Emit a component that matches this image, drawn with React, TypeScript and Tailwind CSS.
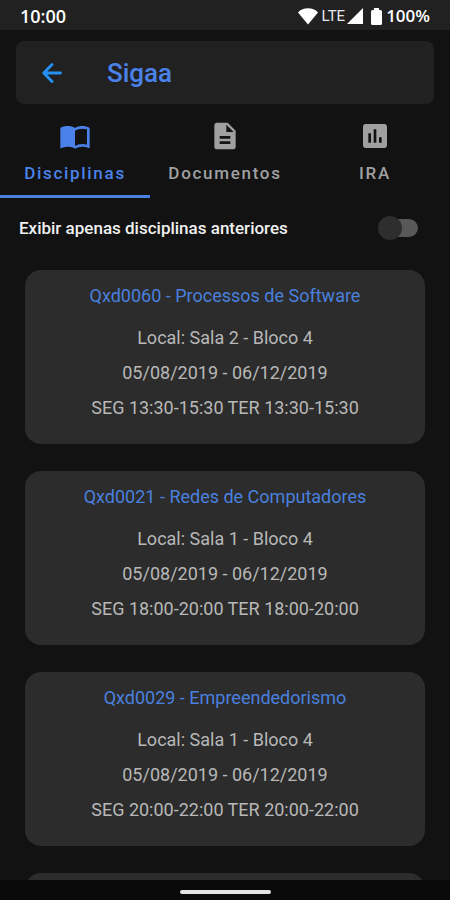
import { useState } from "react";
import type { IconType } from "react-icons";
import { MdAssessment, MdDescription, MdImportContacts } from "react-icons/md";

interface Course {
  code: string;
  name: string;
  room: string;
  period: string;
  schedule: string;
}

const TABS: { label: string; icon: IconType }[] = [
  { label: "Disciplinas", icon: MdImportContacts },
  { label: "Documentos", icon: MdDescription },
  { label: "IRA", icon: MdAssessment },
];

const COURSES: Course[] = [
  {
    code: "Qxd0060",
    name: "Processos de Software",
    room: "Sala 2 - Bloco 4",
    period: "05/08/2019 - 06/12/2019",
    schedule: "SEG 13:30-15:30 TER 13:30-15:30",
  },
  {
    code: "Qxd0021",
    name: "Redes de Computadores",
    room: "Sala 1 - Bloco 4",
    period: "05/08/2019 - 06/12/2019",
    schedule: "SEG 18:00-20:00 TER 18:00-20:00",
  },
  {
    code: "Qxd0029",
    name: "Empreendedorismo",
    room: "Sala 1 - Bloco 4",
    period: "05/08/2019 - 06/12/2019",
    schedule: "SEG 20:00-22:00 TER 20:00-22:00",
  },
];

function StatusBar() {
  return (
    <div className="flex h-[30px] shrink-0 items-center justify-between bg-[#212121] px-5 pt-0.5 font-['Open_Sans',sans-serif] leading-5 text-white">
      <span className="text-lg font-semibold leading-5">10:00</span>
      <div className="flex items-center">
        <svg className="h-[17px] w-5" viewBox="0 0 20 17" fill="currentColor">
          <path d="M10 16.500 0 4.400C2.600 1.700 6 .3 10 .3s7.400 1.400 10 4.100z" />
        </svg>
        <span className="ml-1 font-[Roboto,sans-serif] text-[15px] leading-5 text-gray-200">LTE</span>
        <svg className="ml-0.5 h-4 w-4" viewBox="0 0 16 16" fill="currentColor">
          <path d="M0 16 16 0v16z" />
        </svg>
        <svg className="ml-2 h-[17px] w-[11px]" viewBox="0 0 11 17" fill="currentColor">
          <path d="M3 2V0h5v2h1.500A1.500 1.500 0 0 1 11 3.500v12A1.500 1.500 0 0 1 9.500 17h-8A1.500 1.500 0 0 1 0 15.500v-12A1.500 1.500 0 0 1 1.500 2z" />
        </svg>
        <span className="ml-1 text-[17px] font-semibold leading-5">100%</span>
      </div>
    </div>
  );
}

function CourseCard({ course }: { course: Course }) {
  return (
    <article className="rounded-2xl bg-[#2c2c2c] px-4 pb-[19px] pt-2 text-center text-lg leading-[35px] text-[#b8b8b8]">
      <h2 className="mb-[7px] text-[#4a80df]">
        {course.code} - {course.name}
      </h2>
      <p>Local: {course.room}</p>
      <p>{course.period}</p>
      <p>{course.schedule}</p>
    </article>
  );
}

export default function App() {
  const [tab, setTab] = useState("Disciplinas");
  const [onlyPrevious, setOnlyPrevious] = useState(false);

  return (
    <div className="flex h-screen flex-col overflow-hidden bg-[#121212] font-[Roboto,sans-serif]">
      <StatusBar />

      <header className="mx-4 mt-[11px] flex h-[63px] shrink-0 items-center rounded-lg bg-[#212121] pl-[26px]">
        <button aria-label="Voltar" className="text-[#2491f5]">
          <svg
            className="h-5 w-5"
            viewBox="0 0 20 20"
            fill="none"
            stroke="currentColor"
            strokeWidth="2.800"
            strokeLinecap="round"
            strokeLinejoin="round"
          >
            <path d="M18.500 10H2.500M10 1.500 1.800 10l8.200 8.500" />
          </svg>
        </button>
        <h1 className="ml-[45px] text-[26px] font-medium leading-8 text-[#4a82ea]">Sigaa</h1>
      </header>

      <nav className="mt-4 grid shrink-0 grid-cols-3">
        {TABS.map(({ label, icon: Icon }) => (
          <button
            key={label}
            onClick={() => setTab(label)}
            className={`flex flex-col items-center border-b-3 pb-[10px] ${
              tab === label ? "border-[#4a80df] text-[#4a82ea]" : "border-transparent text-[#a0a0a0]"
            }`}
          >
            <Icon className="h-8 w-8" />
            <span className="mt-[9px] text-[17px] font-medium leading-6 tracking-widest">{label}</span>
          </button>
        ))}
      </nav>

      <label className="mt-4 flex shrink-0 items-center justify-between pl-[19px] pr-8 text-[17px] font-medium leading-7 text-[#f0f0f0]">
        Exibir apenas disciplinas anteriores
        <span className="relative flex h-6 w-10 items-center">
          <input
            type="checkbox"
            checked={onlyPrevious}
            onChange={(e) => setOnlyPrevious(e.target.checked)}
            className="peer ml-1 h-[18px] w-9 appearance-none rounded-full bg-[#585858]"
          />
          <span className="absolute left-0 top-0 h-6 w-6 rounded-full bg-[#2e2e2e] peer-checked:left-4 peer-checked:bg-[#4a82ea]" />
        </span>
      </label>

      <main className="mt-7 flex min-h-0 flex-1 flex-col gap-[27px] overflow-hidden px-[25px]">
        {COURSES.map((c) => (
          <CourseCard key={c.code} course={c} />
        ))}
        <div className="h-44 shrink-0 rounded-2xl bg-[#2c2c2c]" />
      </main>

      <footer className="flex h-5 shrink-0 items-center justify-center bg-[#0a0a0a] pt-1">
        <div className="h-1 w-[91px] rounded-full bg-[#e4e4e4]" />
      </footer>
    </div>
  );
}
